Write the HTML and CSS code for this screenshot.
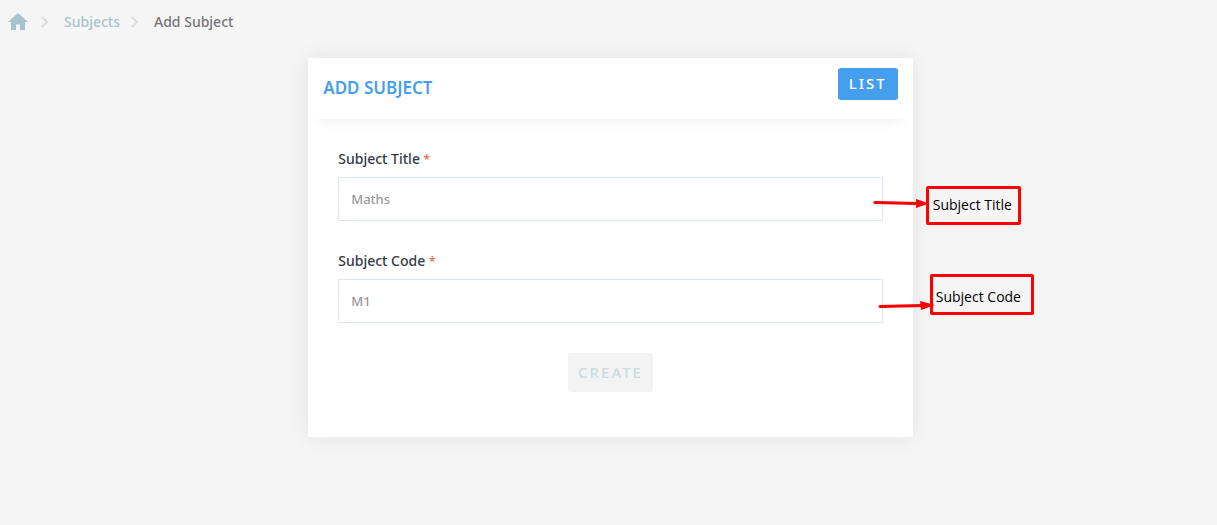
FILE: index.html
```html
<!DOCTYPE html>
<html lang="en">
<head>
<meta charset="utf-8">
<meta name="viewport" content="width=device-width, initial-scale=1">
<title>Add Subject</title>
<link rel="stylesheet" href="styles.css">
</head>
<body>
<nav class="breadcrumb" aria-label="Breadcrumb">
  <a class="home" href="#" aria-label="Home"><svg width="20" height="18" viewBox="0 0 20 18"><path fill="currentColor" d="M10 0 0 9h3v8h5v-5.500h4V17h5V9h3z"/></svg></a>
  <svg class="chevron" width="8" height="12" viewBox="0 0 8 12"><path d="m1 1 5 5-5 5"/></svg>
  <a class="crumb" href="#">Subjects</a>
  <svg class="chevron" width="8" height="12" viewBox="0 0 8 12"><path d="m1 1 5 5-5 5"/></svg>
  <span class="current" aria-current="page">Add Subject</span>
</nav>
<main class="page">
  <section class="card">
    <header class="card-header">
      <h1 class="title">ADD SUBJECT</h1>
      <button class="list-button" type="button">LIST</button>
    </header>
    <form class="form">
      <div class="field">
        <label class="label" for="title">Subject Title <span class="required">*</span></label>
        <div class="control">
          <input class="input" id="title" type="text" placeholder="Maths">
          <svg class="arrow arrow-title" width="60" height="14" viewBox="0 0 60 14"><path class="shaft" d="M3 6.500 46 7.500"/><path class="head" d="M44 3 57 7.500 44 12z"/></svg>
          <span class="note note-title">Subject Title</span>
        </div>
      </div>
      <div class="field">
        <label class="label" for="code">Subject Code <span class="required">*</span></label>
        <div class="control">
          <input class="input" id="code" type="text" placeholder="M1">
          <svg class="arrow arrow-code" width="60" height="14" viewBox="0 0 60 14"><path class="shaft" d="M3 9.500 46 8.500"/><path class="head" d="M43 4 58 8 44 13z"/></svg>
          <span class="note note-code">Subject Code</span>
        </div>
      </div>
      <button class="create-button" type="submit" disabled>CREATE</button>
    </form>
  </section>
</main>
</body>
</html>
```
FILE: styles.css
```css
* { box-sizing: border-box; }
body {
  margin: 0;
  background: #f5f5f5;
  font: 500 14px/20px "Noto Sans", "Open Sans", sans-serif;
  color: #333b45;
}
.breadcrumb { display: flex; align-items: center; padding: 12px 8px; height: 44px; }
.home, .crumb { color: #a9c3cd; text-decoration: none; }
.home { display: flex; margin-right: 13px; }
.chevron { fill: none; stroke: #d9dcdd; stroke-width: 2; margin-right: 15px; }
.crumb { margin-right: 11px; }
.current { color: #757575; }
.page { display: flex; justify-content: center; padding: 14px 2px 24px 6px; }
.card { width: 50%; background: #fff; box-shadow: 0 0 20px rgba(0, 0, 0, .08); }
.card-header {
  display: flex;
  align-items: center;
  justify-content: space-between;
  padding: 10px 15px 19px;
  box-shadow: 0 12px 14px -12px rgba(0, 0, 0, .1);
}
.title { margin: 8px 0 0; font-size: 17px; line-height: 24px; font-weight: 600; color: #459fed; }
.list-button, .create-button {
  border: 0;
  border-radius: 3px;
  padding: 0 10px 2px;
  font: 500 15px/20px "Noto Sans", "Open Sans", sans-serif;
  letter-spacing: 2px;
}
.list-button { height: 32px; min-width: 60px; background: #459fed; color: #fff; }
.create-button { display: block; height: 39px; margin: 0 auto; background: #f3f3f3; color: #c9dae1; }
.form { padding: 30px 30px 45px; }
.field { margin-bottom: 30px; }
.label { display: block; margin-bottom: 8px; }
.required { font-size: 12px; line-height: 16px; color: #f4624a; }
.control { position: relative; }
.input {
  display: block;
  width: 100%;
  height: 44px;
  padding: 0 12px;
  border: 1px solid #dfe7f5;
  background: #fff;
  font: 500 13px/20px "Noto Sans", "Open Sans", sans-serif;
  color: #333b45;
}
.input::placeholder { color: #999; opacity: 1; }
.arrow { position: absolute; z-index: 1; overflow: visible; }
.shaft { fill: none; stroke: #f00; stroke-width: 3; stroke-linecap: round; }
.head { fill: #f00; }
.note {
  position: absolute;
  border: 3px solid #f00;
  border-radius: 2px;
  font: 400 14px/20px "Open Sans", sans-serif;
  color: #000;
  white-space: nowrap;
}
.arrow-title { left: calc(100% - 11px); top: 19px; }
.arrow-code { left: calc(100% - 6px); top: 18px; }
.note-title { left: calc(100% + 43px); top: 9px; width: 95px; padding: 6px 4px 7px; }
.note-code { left: calc(100% + 47px); top: -5px; width: 104px; padding: 10px 3px 5px; }
```
